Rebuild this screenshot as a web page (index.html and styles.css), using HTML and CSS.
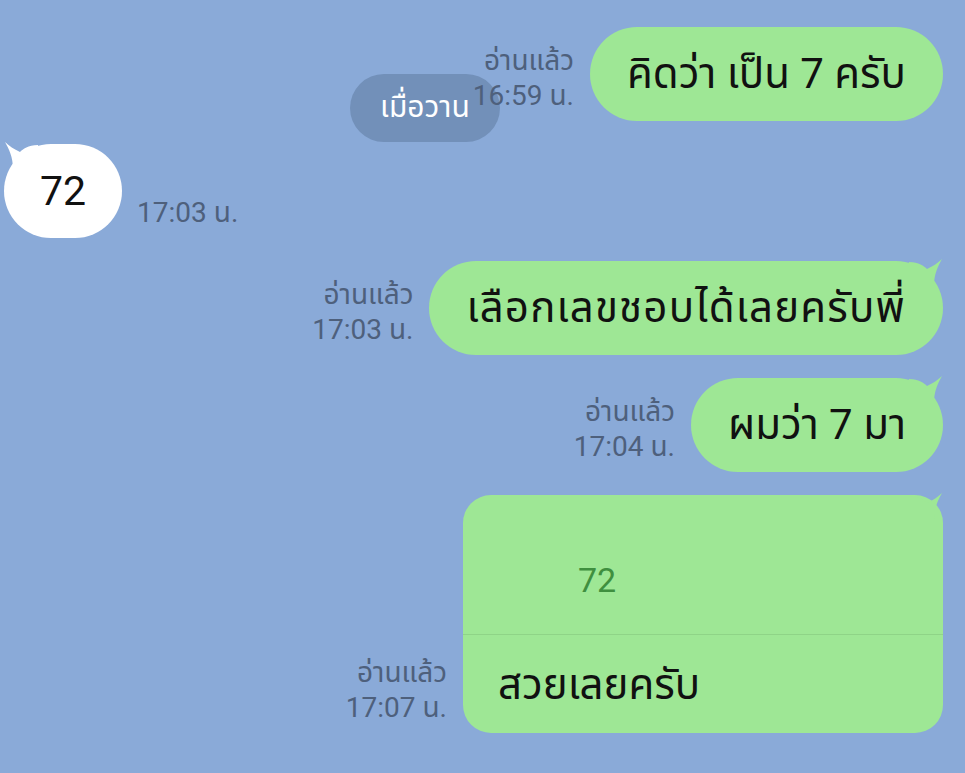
FILE: index.html
```html
<!DOCTYPE html>
<html lang="th">
<head>
    <meta charset="UTF-8">
    <meta name="viewport" content="width=device-width, initial-scale=1.0">
    <title>Chat</title>
    <link rel="stylesheet" href="styles.css">
</head>
<body>
    <div class="chat">
        <!-- Floating date header -->
        <div class="date-pill">เมื่อวาน</div>

        <div class="row sent">
            <div class="meta"><span>อ่านแล้ว</span><span>16:59 น.</span></div>
            <div class="bubble">คิดว่า เป็น 7 ครับ</div>
        </div>

        <div class="row received">
            <div class="bubble white">
                <svg class="tail" width="34" height="30" viewBox="0 0 34 30"><path d="M0,4 C10,4 15,8 18,11 C24,8 29,5 33,1 C29,8 25,16 25,28 L0,28 Z"/></svg>
                72
            </div>
            <div class="meta"><span>17:03 น.</span></div>
        </div>

        <div class="row sent">
            <div class="meta"><span>อ่านแล้ว</span><span>17:03 น.</span></div>
            <div class="bubble wide">
                <svg class="tail" width="34" height="30" viewBox="0 0 34 30"><path d="M0,4 C10,4 15,8 18,11 C24,8 29,5 33,1 C29,8 25,16 25,28 L0,28 Z"/></svg>
                เลือกเลขชอบได้เลยครับพี่
            </div>
        </div>

        <div class="row sent">
            <div class="meta"><span>อ่านแล้ว</span><span>17:04 น.</span></div>
            <div class="bubble">
                <svg class="tail" width="34" height="30" viewBox="0 0 34 30"><path d="M0,4 C10,4 15,8 18,11 C24,8 29,5 33,1 C29,8 25,16 25,28 L0,28 Z"/></svg>
                ผมว่า 7 มา
            </div>
        </div>

        <div class="row sent">
            <div class="meta"><span>อ่านแล้ว</span><span>17:07 น.</span></div>
            <div class="bubble reply">
                <svg class="tail" width="34" height="30" viewBox="0 0 34 30"><path d="M0,4 C10,4 15,8 18,11 C24,8 29,5 33,1 C29,8 25,16 25,28 L0,28 Z"/></svg>
                <div class="quote">72</div>
                <div class="reply-text">สวยเลยครับ</div>
            </div>
        </div>
    </div>
</body>
</html>
```

FILE: styles.css
```css
body {
    margin: 0;
    background-color: #8aaad8;
    font-family: Roboto, "Noto Sans Thai", "Noto Sans Thai UI", sans-serif;
    height: 100vh;
    overflow: hidden;
}
.chat {
    position: relative;
    display: flex;
    flex-direction: column;
    gap: 23px;
    padding: 27px 22px 0 4px;
}
.date-pill {
    position: absolute;
    left: 350px;
    top: 74px;
    width: 150px;
    height: 68px;
    line-height: 66px;
    border-radius: 34px;
    background: #7290b9;
    color: #fff;
    font-size: 30px;
    text-align: center;
    z-index: 0;
}
.row {
    position: relative;
    z-index: 1;
    display: flex;
    align-items: flex-end;
}
.sent {
    justify-content: flex-end;
}
.meta {
    display: flex;
    flex-direction: column;
    align-items: flex-end;
    font-size: 28px;
    line-height: 35px;
    color: #4e607c;
    padding-bottom: 8px;
}
.sent .meta {
    margin-right: 16px;
}
.received .meta {
    margin-left: 15px;
    align-items: flex-start;
}
.bubble {
    position: relative;
    background: #9ee795;
    color: #111;
    font-size: 42px;
    line-height: 48px;
    padding: 23px 37px;
    border-radius: 48px;
    white-space: nowrap;
}
.bubble.wide {
    letter-spacing: 1.2px;
}
.bubble.white {
    background: #fff;
    font-size: 41px;
    padding: 23px 36px;
}
.tail {
    position: absolute;
    top: -3px;
    right: 0;
    fill: #9ee795;
}
.white .tail {
    right: auto;
    left: 0;
    transform: scaleX(-1);
    fill: #fff;
}
.bubble.reply {
    width: 480px;
    padding: 0;
    border-radius: 28px;
    box-sizing: border-box;
}
.quote {
    height: 140px;
    line-height: 170px;
    padding-left: 115px;
    font-size: 34px;
    color: #3f8f3f;
    border-bottom: 1px solid #8fd487;
    box-sizing: border-box;
}
.reply-text {
    height: 98px;
    line-height: 100px;
    padding-left: 35px;
}
```
